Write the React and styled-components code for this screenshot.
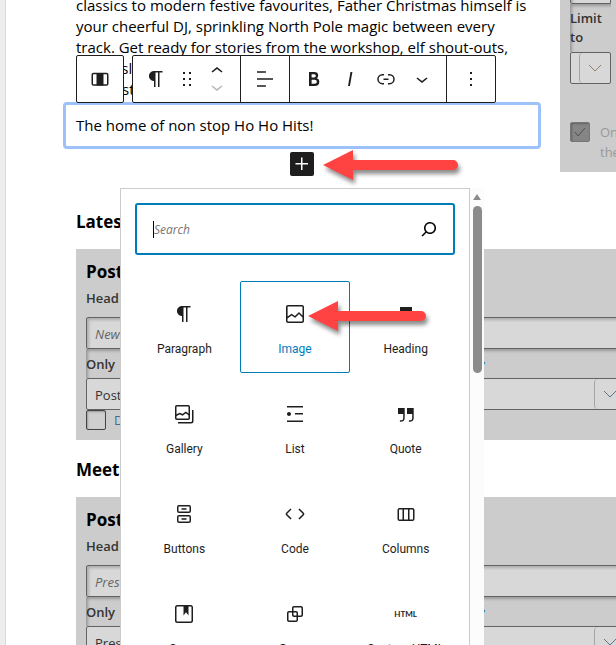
import React from 'react'
import styled, { createGlobalStyle, css } from 'styled-components'

const icons = {
  paragraph: <path d="m9.996 14v-.225l.004 0v6.225h1.5v-14.5h2.5v14.5h1.5v-14.5h3v-1.5h-8.504c-2.761 0-5 2.239-5 5 0 2.761 2.239 5 5 5z" />,
  drag: <path d="M8 7h2V5H8v2zm0 6h2v-2H8v2zm0 6h2v-2H8v2zm6-14v2h2V5h-2zm0 8h2v-2h-2v2zm0 6h2v-2h-2v2z" />,
  up: <path d="M6.5 12.4L12 8l5.5 4.4-.9 1.2L12 10l-4.5 3.6-1-1.2z" />,
  down: <path d="M17.5 11.6L12 16l-5.5-4.4.9-1.2L12 14l4.5-3.6 1 1.2z" />,
  align: <path d="M4 19.8h8.9v-1.5H4v1.5zm8.9-15.6H4v1.5h8.9V4.2zm-8.9 7v1.5h16v-1.5H4z" />,
  bold: <path d="M14.7 11.3c1-.6 1.5-1.6 1.5-3 0-2.3-1.3-3.4-4-3.4H7v14h5.8c1.4 0 2.5-.3 3.3-1 .8-.7 1.2-1.7 1.2-2.9.1-1.9-.8-3.1-2.6-3.7zm-5.1-4h2.3c.6 0 1.1.1 1.4.4.3.3.5.7.5 1.2s-.2 1-.5 1.2c-.3.3-.8.4-1.4.4H9.6V7.3zm4.6 9c-.4.3-1 .4-1.7.4H9.6v-3.9h2.9c.7 0 1.3.2 1.7.5.4.3.6.8.6 1.5s-.2 1.2-.6 1.5z" />,
  italic: <path d="M12.5 5L10 19h1.9l2.5-14z" />,
  link: <path d="M10 17.389H8.444A5.194 5.194 0 1 1 8.444 7H10v1.5H8.444a3.694 3.694 0 0 0 0 7.389H10v1.5ZM14 7h1.556a5.194 5.194 0 0 1 0 10.39H14v-1.5h1.556a3.694 3.694 0 0 0 0-7.39H14V7Zm-4.5 6h5v-1.5h-5V13Z" />,
  more: <path d="M13 19h-2v-2h2v2zm0-6h-2v-2h2v2zm0-6h-2V5h2v2z" />,
  plus: <path d="M11 12.5V18h1.5v-5.5H18V11h-5.5V5.500H11V11H5.500v1.500H11Z" />,
  search: <path d="M13 5c-3.300 0-6 2.700-6 6 0 1.400.5 2.700 1.300 3.700l-3.800 3.800 1.100 1.100 3.800-3.800c1 .8 2.300 1.300 3.700 1.300 3.300 0 6-2.700 6-6S16.300 5 13 5zm0 10.500c-2.500 0-4.500-2-4.500-4.500s2-4.500 4.500-4.500 4.500 2 4.500 4.500-2 4.500-4.500 4.500z" />,
  image: <path d="M19 3H5c-1.1 0-2 .9-2 2v14c0 1.1.9 2 2 2h14c1.1 0 2-.9 2-2V5c0-1.1-.9-2-2-2zM5 4.5h14c.3 0 .5.2.5.5v8.4l-3-2.900c-.3-.3-.8-.3-1 0L11.900 14 9 12c-.3-.2-.6-.2-.8 0l-3.600 2.600V5c-.1-.3.1-.5.4-.5zm14 15H5c-.3 0-.5-.2-.5-.5v-2.400l4.100-3 3 1.900c.3.2.7.2.9-.1L16 12l3.500 3.400V19c0 .3-.2.5-.5.5z" />,
  heading: <path d="M6 5V18.591L12 13.847L18 18.591V5H6Z" />,
  gallery: (
    <g fill="none" stroke="currentColor" strokeWidth="1.5">
      <rect x="3.75" y="3.75" width="13.5" height="13.5" rx="1" />
      <path d="M3.75 13.500l4-2 2.800 1.300 3.200-2.300 3.500 2.400" />
      <path d="M20.750 8v11c0 1.100-.6 1.750-1.750 1.750H6" />
    </g>
  ),
  list: <path d="M4 4v1.5h16V4H4zm8 8.5h8V11h-8v1.5zM4 20h16v-1.5H4V20zm2-6c1.100 0 2-.9 2-2s-.9-2-2-2-2 .9-2 2 .9 2 2 2z" />,
  quote: <path d="M13 6v6h5.2v4c0 .8-.2 1.4-.5 1.7-.6.6-1.6.6-2.5.5h-.3v1.5h.5c1 0 2.3-.1 3.3-1 .6-.6 1-1.6 1-2.8V6H13zm-9 6h5.2v4c0 .8-.2 1.4-.5 1.7-.6.6-1.6.6-2.5.5h-.3v1.5h.5c1 0 2.3-.1 3.3-1 .6-.6 1-1.6 1-2.8V6H4v6z" />,
  buttons: (
    <g fill="none" stroke="currentColor" strokeWidth="1.5">
      <rect x="5.75" y="3.75" width="12.5" height="6.5" rx="1.25" />
      <rect x="5.75" y="13.75" width="12.5" height="6.5" rx="1.25" />
      <path d="M9.500 7h5M9.500 17h5" />
    </g>
  ),
  code: <path d="M20.8 10.7l-4.3-4.3-1.1 1.1 4.3 4.3c.1.1.1.3 0 .4l-4.3 4.3 1.1 1.1 4.3-4.3c.7-.8.7-1.9 0-2.6zM4.2 11.8l4.3-4.3-1-1-4.3 4.3c-.7.7-.7 1.8 0 2.5l4.3 4.3 1.1-1.1-4.3-4.3c-.2-.1-.2-.3-.1-.4z" />,
  columns: (
    <g fill="none" stroke="currentColor" strokeWidth="1.5">
      <rect x="4.250" y="6.750" width="15.500" height="11.500" rx="1.250" />
      <path d="M9.250 6.500v11.500M14.750 6.500v11.500" />
    </g>
  ),
  column: (
    <g>
      <rect x="4.250" y="6.500" width="15.500" height="11.500" rx="1.250" fill="none" stroke="currentColor" strokeWidth="1.500" />
      <path d="M8.500 6h7v12.500h-7z" />
    </g>
  ),
  cover: <path d="M18.7 3H5.3C4 3 3 4 3 5.3v13.4C3 20 4 21 5.3 21h13.4c1.3 0 2.3-1 2.3-2.3V5.3C21 4 20 3 18.700 3zm.8 15.700c0 .4-.4.8-.8.8H5.300c-.4 0-.8-.4-.8-.8V5.300c0-.4.4-.8.8-.8h6.200v8.900l2.500-3.100 2.500 3.100V4.500h2.200c.4 0 .8.4.8.8v13.400z" />,
  group: <path d="M18 4h-7c-1.1 0-2 .9-2 2v3H6c-1.1 0-2 .9-2 2v7c0 1.1.9 2 2 2h7c1.1 0 2-.9 2-2v-3h3c1.1 0 2-.9 2-2V6c0-1.1-.9-2-2-2zm-4.5 14c0 .3-.2.5-.5.5H6c-.3 0-.5-.2-.5-.5v-7c0-.3.2-.5.5-.5h3V13c0 1.1.9 2 2 2h2.500v3zm0-4.500H11c-.3 0-.5-.2-.5-.5v-2.500H13c.3 0 .5.2.5.5v2.500zm5-.5c0 .3-.2.5-.5.5h-3V11c0-1.100-.9-2-2-2h-2.500V6c0-.3.2-.5.5-.5h7c.3 0 .5.2.5.5v7z" />,
}

function Icon({ name }) {
  return (
    <Svg width="24" height="24" viewBox="0 0 24 24" aria-hidden="true">
      {icons[name]}
    </Svg>
  )
}

function Arrow({ length, ...rest }) {
  return (
    <ArrowSvg width={length} height="30" aria-hidden="true" {...rest}>
      <path d={`M0 15L30 0V10H${length - 5}a5 5 0 0 1 0 10H30V30Z`} fill="#ff4343" />
    </ArrowSvg>
  )
}

const blocks = [
  { name: 'Paragraph', icon: 'paragraph' },
  { name: 'Image', icon: 'image', active: true },
  { name: 'Heading', icon: 'heading' },
  { name: 'Gallery', icon: 'gallery' },
  { name: 'List', icon: 'list' },
  { name: 'Quote', icon: 'quote' },
  { name: 'Buttons', icon: 'buttons' },
  { name: 'Code', icon: 'code' },
  { name: 'Columns', icon: 'columns' },
  { name: 'Cover', icon: 'cover' },
  { name: 'Group', icon: 'group' },
  { name: 'Custom HTML' },
]

function BlockToolbar() {
  return (
    <Toolbar role="toolbar">
      <ToolbarBox>
        <ToolGroup>
          <ToolButton aria-label="Column"><Icon name="column" /></ToolButton>
        </ToolGroup>
      </ToolbarBox>
      <ToolbarBox>
        <ToolGroup>
          <ToolButton aria-label="Paragraph"><Icon name="paragraph" /></ToolButton>
          <ToolButton aria-label="Drag" $narrow><Icon name="drag" /></ToolButton>
          <Movers>
            <MoveButton aria-label="Move up"><Icon name="up" /></MoveButton>
            <MoveButton aria-label="Move down" disabled><Icon name="down" /></MoveButton>
          </Movers>
        </ToolGroup>
        <ToolGroup>
          <ToolButton aria-label="Align"><Icon name="align" /></ToolButton>
        </ToolGroup>
        <ToolGroup>
          <ToolButton aria-label="Bold"><Icon name="bold" /></ToolButton>
          <ToolButton aria-label="Italic"><Icon name="italic" /></ToolButton>
          <ToolButton aria-label="Link"><Icon name="link" /></ToolButton>
          <ToolButton aria-label="More"><Icon name="down" /></ToolButton>
        </ToolGroup>
        <ToolGroup>
          <ToolButton aria-label="Options"><Icon name="more" /></ToolButton>
        </ToolGroup>
      </ToolbarBox>
    </Toolbar>
  )
}

function InserterMenu() {
  return (
    <Menu>
      <MenuBody>
        <SearchBox>
          <Caret />
          <SearchInput type="text" placeholder="Search" />
          <Icon name="search" />
        </SearchBox>
        <BlockGrid>
          {blocks.map((block) => (
            <BlockTile key={block.name} $active={block.active}>
              {block.icon ? <Icon name={block.icon} /> : <HtmlMark>HTML</HtmlMark>}
              <span>{block.name}</span>
              {block.active && <TileArrow length={118} />}
            </BlockTile>
          ))}
        </BlockGrid>
      </MenuBody>
      <ScrollTrack>
        <ScrollUp width="10" height="6" viewBox="0 0 10 6" aria-hidden="true">
          <path d="M5 0L9 6H1Z" />
        </ScrollUp>
        <ScrollThumb />
      </ScrollTrack>
    </Menu>
  )
}

function Dropdown({ id, value, compact }) {
  return (
    <SelectWrap $compact={compact}>
      <Select id={id} $compact={compact}>
        <option>{value}</option>
      </Select>
      <SelectArrow>
        <svg width="14" height="8" viewBox="0 0 14 8" fill="none" stroke="currentColor">
          <path d="M1 1l6 6 6-6" />
        </svg>
      </SelectArrow>
    </SelectWrap>
  )
}

function PostSection({ title, id, placeholder, value }) {
  return (
    <section>
      <SectionTitle>{title}</SectionTitle>
      <Panel>
        <PanelTitle>Post</PanelTitle>
        <Label htmlFor={`${id}-head`}>Head</Label>
        <TextInput id={`${id}-head`} placeholder={placeholder} />
        <OnlyRow>
          <label htmlFor={`${id}-only`}>Only</label>
          <a href="#only">y</a>
        </OnlyRow>
        <Dropdown id={`${id}-only`} value={value} />
        <CheckRow $blue>
          <Check type="checkbox" />
          D
        </CheckRow>
      </Panel>
    </section>
  )
}

function App() {
  return (
    <>
      <GlobalStyle />
      <Page>
        <TopRow>
          <div>
            <Intro>
              classics to modern festive favourites, Father Christmas himself is<br />
              your cheerful DJ, sprinkling North Pole magic between every<br />
              track. Get ready for stories from the workshop, elf shout-outs,<br />
              magic sleigh<br />
              merry stories
            </Intro>
            <SelectedBlock>
              <BlockToolbar />
              <BlockText>The home of non stop Ho Ho Hits!</BlockText>
              <Inserter>
                <InserterButton aria-label="Add block"><Icon name="plus" /></InserterButton>
                <InserterArrow length={135} />
                <InserterMenu />
              </Inserter>
            </SelectedBlock>
          </div>
          <SidePanel>
            <SideInput aria-label="Limit" />
            <LimitLabel htmlFor="limit">Limit to</LimitLabel>
            <Dropdown id="limit" value="" compact />
            <OnlyCheck>
              <Check type="checkbox" defaultChecked disabled />
              <span>Only<br />the</span>
            </OnlyCheck>
          </SidePanel>
        </TopRow>
        <PostSection id="latest" title="Latest" placeholder="News" value="Posts" />
        <PostSection id="meet" title="Meet" placeholder="Presenters" value="Presenters" />
      </Page>
    </>
  )
}

export default App

const GlobalStyle = createGlobalStyle`
* {
  box-sizing: border-box;
}
body {
  margin: 0;
  background: #ededed;
  color: #000;
  font-family: "Open Sans", "Noto Sans", sans-serif;
  font-size: 15px;
  overflow: hidden;
}
button, input, select {
  font-family: inherit;
  margin: 0;
}
`

const Svg = styled.svg`
  display: block;
  flex: none;
  fill: currentColor;
`

const ArrowSvg = styled.svg`
  position: absolute;
  overflow: visible;
  pointer-events: none;
  filter: drop-shadow(2px 4px 2px rgba(0, 0, 0, 0.45));
`

const Page = styled.main`
  height: 100vh;
  margin-left: 5px;
  margin-right: -20px;
  padding-left: 70px;
  background: #fff;
  border-left: 1px solid #d8d8d8;
  overflow: hidden;
`

const TopRow = styled.div`
  display: grid;
  grid-template-columns: minmax(0, 1fr) 76px;
  align-items: start;
  margin-bottom: 33px;
`

const Intro = styled.p`
  margin: -5px 0 2px;
  line-height: 21px;
  white-space: nowrap;
`

const SelectedBlock = styled.div`
  position: relative;
  margin: 0 19px 0 -13px;
`

const BlockText = styled.p`
  margin: 0 0 3px;
  padding: 10px;
  border: 3px solid #9dc1f9;
  border-radius: 4px;
  line-height: 21px;
`

const Toolbar = styled.div`
  position: absolute;
  bottom: 100%;
  left: 13px;
  z-index: 1;
  display: flex;
  gap: 8px;
  margin-bottom: -1px;
`

const ToolbarBox = styled.div`
  display: flex;
  height: 48px;
  background: #fff;
  border: 1px solid #1e1e1e;
  border-radius: 2px;
`

const ToolGroup = styled.div`
  display: flex;
  align-items: center;
  padding: 0 5px;
  & + & {
    padding: 0 6px;
    border-left: 1px solid #1e1e1e;
  }
`

const ToolButton = styled.button`
  display: flex;
  justify-content: center;
  align-items: center;
  width: ${({ $narrow }) => ($narrow ? '25px' : '36px')};
  height: 36px;
  padding: 0;
  background: none;
  border: 0;
  color: #1e1e1e;
`

const Movers = styled.div`
  display: flex;
  flex-direction: column;
`

const MoveButton = styled(ToolButton)`
  height: 20px;
  overflow: hidden;
  align-items: flex-start;
  &:first-child {
    align-items: flex-end;
    height: 20px;
  }
  &:first-child svg {
    margin-bottom: -4px;
  }
  &:last-child svg {
    margin-top: -4px;
  }
  &:disabled {
    color: #b8b8b8;
  }
`

const Inserter = styled.div`
  position: relative;
  width: 24px;
  margin: 0 auto;
`

const InserterButton = styled.button`
  display: block;
  width: 24px;
  height: 24px;
  padding: 0;
  background: #1e1e1e;
  color: #fff;
  border: 0;
  border-radius: 2px;
`

const InserterArrow = styled(Arrow)`
  top: -2px;
  left: 33px;
`

const Menu = styled.div`
  position: absolute;
  top: 36px;
  left: 50%;
  z-index: 2;
  display: flex;
  width: 364px;
  transform: translateX(-50%);
  background: #fff;
`

const MenuBody = styled.div`
  flex: 1;
  border: 1px solid #ccc;
`

const SearchBox = styled.div`
  display: flex;
  align-items: center;
  height: 52px;
  margin: 14px 14px 26px;
  padding: 0 12px 0 16px;
  border: 2px solid #007cba;
  border-radius: 3px;
`

const Caret = styled.span`
  width: 1px;
  height: 17px;
  background: #000;
`

const SearchInput = styled.input`
  flex: 1;
  min-width: 0;
  padding: 0;
  border: 0;
  outline: 0;
  font-size: 12px;
  &::placeholder {
    color: #757575;
    font-style: italic;
  }
`

const BlockGrid = styled.div`
  display: grid;
  grid-template-columns: repeat(3, 1fr);
  row-gap: 8px;
  padding: 0 8px 8px;
`

const BlockTile = styled.button`
  position: relative;
  display: flex;
  flex-direction: column;
  align-items: center;
  gap: 14px;
  height: 92px;
  padding: 20px 0 0;
  background: none;
  border: 1px solid transparent;
  border-radius: 2px;
  color: #1e1e1e;
  font-family: Roboto, sans-serif;
  font-size: 12px;
  line-height: 18px;
  ${({ $active }) => $active && css`
    z-index: 1;
    border-color: #007cba;
    span {
      color: #007cba;
    }
  `}
`

const TileArrow = styled(Arrow)`
  top: 19px;
  left: 67px;
`

const HtmlMark = styled.b`
  height: 24px;
  font-family: Lato, sans-serif;
  font-size: 8px;
  line-height: 24px;
`

const ScrollTrack = styled.div`
  display: flex;
  flex-direction: column;
  align-items: center;
  gap: 6px;
  width: 14px;
  padding-top: 6px;
  background: #fcfcfc;
`

const ScrollUp = styled.svg`
  fill: #8b8b8b;
`

const ScrollThumb = styled.div`
  width: 9px;
  height: 167px;
  background: #8b8b8b;
  border-radius: 5px;
`

const SectionTitle = styled.h2`
  margin: 0 0 14px;
  font-size: 17px;
  line-height: 26px;
`

const Panel = styled.div`
  margin-bottom: 17px;
  padding: 10px;
  background: #ccc;
`

const PanelTitle = styled.h3`
  margin: 0;
  font-size: 17px;
  line-height: 26px;
`

const Label = styled.label`
  display: block;
  margin-bottom: 6px;
  color: #333;
  font-size: 13px;
  font-weight: 600;
  line-height: 26px;
`

const TextInput = styled.input`
  display: block;
  width: 100%;
  height: 32px;
  padding: 1px 8px 0;
  background: #d8d8d8;
  border: 1px solid #636363;
  border-radius: 2px 0 0 2px;
  box-shadow: inset 2px 2px 3px rgba(0, 0, 0, 0.2);
  color: #444;
  font-size: 13px;
  &::placeholder {
    color: #666;
    font-style: italic;
  }
`

const fieldShade = css`
  box-shadow: inset 2px 2px 3px rgba(0, 0, 0, 0.25);
  color: #333;
  font-size: 13px;
  font-weight: 600;
`

const OnlyRow = styled.div`
  display: flex;
  justify-content: space-between;
  height: 29px;
  padding-right: 141px;
  line-height: 31px;
  ${fieldShade}
  a {
    color: #135e96;
    text-decoration: none;
  }
`

const SelectWrap = styled.div`
  display: flex;
  width: ${({ $compact }) => ($compact ? '41px' : '100%')};
  height: 32px;
  background: #d8d8d8;
  border: 1px solid #636363;
  border-radius: 2px;
  color: ${({ $compact }) => ($compact ? '#8f7e68' : '#5d7488')};
`

const Select = styled.select`
  flex: 1;
  min-width: 0;
  padding: ${({ $compact }) => ($compact ? '0' : '1px 8px 0')};
  appearance: none;
  background: none;
  border: 0;
  color: #333;
  font-size: 13px;
`

const SelectArrow = styled.span`
  display: flex;
  flex: none;
  align-items: center;
  justify-content: center;
  width: 31px;
  border-left: 1px solid #a5a5a5;
  border-radius: 4px 0 0 4px;
`

const CheckRow = styled.label`
  display: flex;
  gap: 8px;
  color: ${({ $blue }) => ($blue ? '#3f6a94' : '#999')};
  font-size: 13px;
  line-height: 20px;
`

const Check = styled.input`
  flex: none;
  display: block;
  width: 20px;
  height: 20px;
  appearance: none;
  background: #cfcfcf;
  border: 1px solid #444;
  border-radius: 2px;
  box-shadow: inset 1px 1px 2px rgba(0, 0, 0, 0.25);
  &:checked {
    background: #858585 url("data:image/svg+xml,%3Csvg xmlns='http://www.w3.org/2000/svg' width='12' height='10' fill='none' stroke='%23505050'%3E%3Cpath d='M1 5l3 4 7-8'/%3E%3C/svg%3E") center no-repeat;
    border-color: #777;
  }
`

const SidePanel = styled.aside`
  padding: 0 10px 10px;
  background: #ccc;
`

const SideInput = styled(TextInput)`
  width: 41px;
  margin-top: -28px;
`

const LimitLabel = styled.label`
  display: block;
  width: 41px;
  padding: 5px 0;
  line-height: 19px;
  ${fieldShade}
`

const OnlyCheck = styled(CheckRow)`
  gap: 10px;
  margin-top: 38px;
`
